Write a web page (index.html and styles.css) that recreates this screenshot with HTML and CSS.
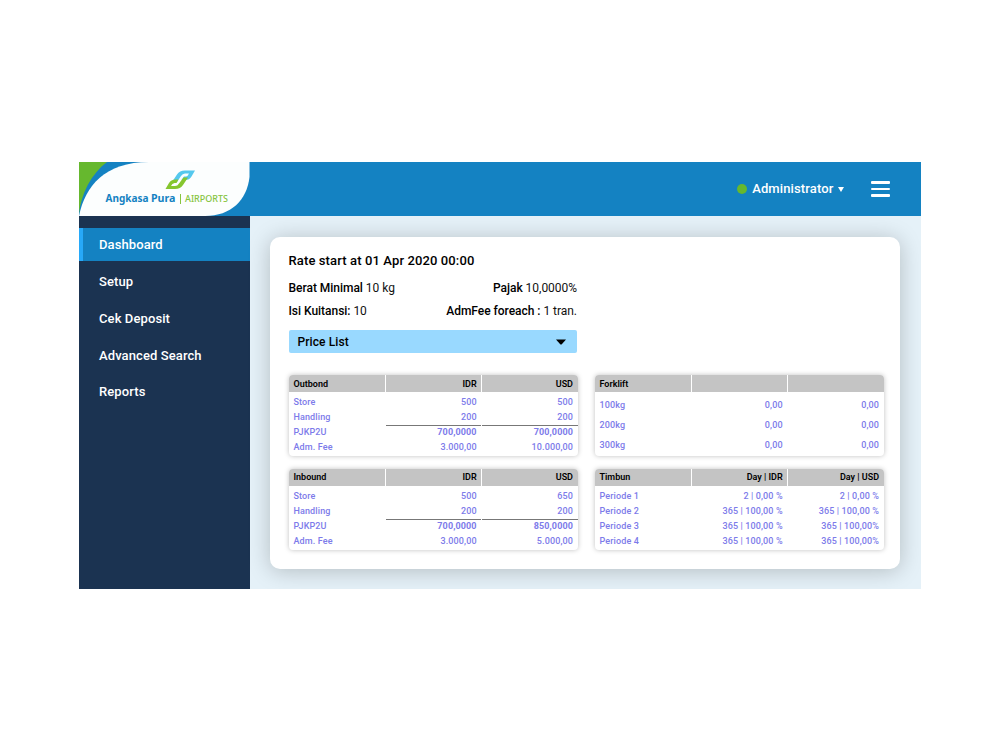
FILE: index.html
```html
<!DOCTYPE html>
<html lang="id">
<head>
    <meta charset="UTF-8">
    <meta name="viewport" content="width=device-width, initial-scale=1.0">
    <title>Angkasa Pura Airports - Dashboard</title>
    <link rel="stylesheet" href="styles.css">
</head>
<body>
    <div class="app">
        <header class="topbar">
            <svg class="brand" width="171" height="54" viewBox="0 0 171 54">
                <path d="M0 0H28C12 12 2 32 0 52Z" fill="#66b82e"/>
                <path d="M70 0H170.500V15C168 38 152 54 126 54H0C6 24 26 0 70 0Z" fill="#fcfefe"/>
                <!-- brand mark -->
                <path d="M93 20L98 12.500Q100.500 8.500 106 8.500H116L112.500 14.500Q110.500 18 106 18H102.500L105 14.500H107Q109 14 110 11.500H106Q103.500 11.500 102 14L98 20Z" fill="#55c8ee"/>
                <path d="M109 15.500L104 23Q101.500 27 96 27H86.500L90 21Q92 17.500 96.500 17.500H99.500L97.500 21H95.500Q93 21.500 92 24H96Q98.500 24 100 21.500L104.500 15.500Z" fill="#86c62f"/>
                <g class="brand-text">
                    <text class="brand-main" x="26.500" y="40" textLength="43" lengthAdjust="spacingAndGlyphs">Angkasa</text>
                    <text class="brand-main" x="72" y="40" textLength="24.500" lengthAdjust="spacingAndGlyphs">Pura</text>
                    <rect x="101" y="32" width="1" height="10" fill="#86c440"/>
                    <text class="brand-sub" x="106" y="40" textLength="43" lengthAdjust="spacingAndGlyphs">AIRPORTS</text>
                </g>
            </svg>
            <div class="user">
                <span class="status"></span>
                <span class="user-name">Administrator</span>
                <svg class="user-caret" width="6" height="5" viewBox="0 0 6 5"><path d="M0 0H6L3 5Z" fill="#fff"/></svg>
                <div class="menu-btn"><span></span><span></span><span></span></div>
            </div>
        </header>

        <div class="body">
            <nav class="sidebar">
                <a class="active">Dashboard</a>
                <a>Setup</a>
                <a>Cek Deposit</a>
                <a>Advanced Search</a>
                <a>Reports</a>
            </nav>

            <main class="content">
                <section class="card">
                    <div class="rate">
                        <h2>Rate start at 01 Apr 2020 00:00</h2>
                        <div class="rate-row">
                            <span><b>Berat Minimal</b> 10 kg</span>
                            <span><b>Pajak</b> 10,0000%</span>
                        </div>
                        <div class="rate-row">
                            <span><b>Isi Kuitansi:</b> 10</span>
                            <span><b>AdmFee foreach :</b> 1 tran.</span>
                        </div>
                        <div class="select">
                            <span>Price List</span>
                            <svg width="10" height="6" viewBox="0 0 10 6"><path d="M0 0.500H10L6 5Q5 6 4 5Z" fill="#000"/></svg>
                        </div>
                    </div>

                    <div class="tables">
                        <div class="panel">
                            <table>
                                <thead>
                                    <tr><th>Outbond</th><th>IDR</th><th>USD</th></tr>
                                </thead>
                                <tbody>
                                    <tr><td>Store</td><td>500</td><td>500</td></tr>
                                    <tr><td>Handling</td><td>200</td><td>200</td></tr>
                                    <tr class="total"><td>PJKP2U</td><td>700,0000</td><td>700,0000</td></tr>
                                    <tr><td>Adm. Fee</td><td>3.000,00</td><td>10.000,00</td></tr>
                                </tbody>
                            </table>
                        </div>

                        <div class="panel forklift">
                            <table>
                                <thead>
                                    <tr><th>Forklift</th><th></th><th></th></tr>
                                </thead>
                                <tbody>
                                    <tr><td>100kg</td><td>0,00</td><td>0,00</td></tr>
                                    <tr><td>200kg</td><td>0,00</td><td>0,00</td></tr>
                                    <tr><td>300kg</td><td>0,00</td><td>0,00</td></tr>
                                </tbody>
                            </table>
                        </div>

                        <div class="panel">
                            <table>
                                <thead>
                                    <tr><th>Inbound</th><th>IDR</th><th>USD</th></tr>
                                </thead>
                                <tbody>
                                    <tr><td>Store</td><td>500</td><td>650</td></tr>
                                    <tr><td>Handling</td><td>200</td><td>200</td></tr>
                                    <tr class="total"><td>PJKP2U</td><td>700,0000</td><td>850,0000</td></tr>
                                    <tr><td>Adm. Fee</td><td>3.000,00</td><td>5.000,00</td></tr>
                                </tbody>
                            </table>
                        </div>

                        <div class="panel">
                            <table>
                                <thead>
                                    <tr><th>Timbun</th><th>Day | IDR</th><th>Day | USD</th></tr>
                                </thead>
                                <tbody>
                                    <tr><td>Periode 1</td><td>2 | 0,00 %</td><td>2 | 0,00 %</td></tr>
                                    <tr><td>Periode 2</td><td>365 | 100,00 %</td><td>365 | 100,00 %</td></tr>
                                    <tr><td>Periode 3</td><td>365 | 100,00 %</td><td>365 | 100,00%</td></tr>
                                    <tr><td>Periode 4</td><td>365 | 100,00 %</td><td>365 | 100,00%</td></tr>
                                </tbody>
                            </table>
                        </div>
                    </div>
                </section>
            </main>
        </div>
    </div>
</body>
</html>
```
FILE: styles.css
```css
* {
    box-sizing: border-box;
}

body {
    margin: 0;
    padding: 162px 79px 0;
    background-color: #fff;
    font-family: Roboto, sans-serif;
    color: #111;
}

.app {
    width: 842px;
    height: 427px;
    overflow: hidden;
}

/* top bar */
.topbar {
    display: flex;
    justify-content: space-between;
    height: 54px;
    background-color: #1482c2;
}

.brand-text {
    font-family: "Noto Sans", sans-serif;
}

.brand-main {
    font-size: 10.500px;
    font-weight: 700;
    fill: #1482c2;
}

.brand-sub {
    font-size: 9.500px;
    font-weight: 500;
    fill: #86c440;
}

.user {
    display: flex;
    align-items: center;
    padding-right: 31px;
    color: #fff;
}

.status {
    width: 10px;
    height: 10px;
    margin-right: 5px;
    border-radius: 50%;
    background-color: #66b82e;
}

.user-name {
    font-size: 13px;
    line-height: 16px;
    padding-bottom: 1px;
    font-weight: 500;
    letter-spacing: 0.13px;
}

.user-caret {
    margin: 1px 27.500px 0 4px;
}

.menu-btn {
    display: flex;
    flex-direction: column;
    gap: 4px;
    width: 19px;
}

.menu-btn span {
    height: 2.600px;
    border-radius: 1px;
    background-color: #fff;
}

/* sidebar */
.body {
    display: flex;
    height: 373px;
}

.sidebar {
    width: 170.500px;
    padding-top: 12px;
    background-color: #1b3351;
}

.sidebar a {
    display: block;
    height: 33px;
    margin-bottom: 3.850px;
    padding-left: 20px;
    line-height: 33px;
    font-size: 13px;
    font-weight: 500;
    letter-spacing: 0.1px;
    color: #fff;
}

.sidebar .active {
    padding-left: 16px;
    border-left: 4px solid #27a9f9;
    background-color: #1482c2;
}

/* content */
.content {
    flex: 1;
    padding: 20.500px 20px 20px;
    background-color: #e5f1f8;
}

.card {
    width: 630.500px;
    height: 332px;
    padding: 16.500px 15px 0 19px;
    border-radius: 10px;
    background-color: #fff;
    box-shadow: 0 2px 22px rgba(0, 0, 0, 0.22);
}

.rate {
    width: 288.500px;
}

.rate h2 {
    margin: 0 0 11px;
    font-size: 13px;
    line-height: 16px;
    font-weight: 500;
    letter-spacing: 0.12px;
    color: #000;
}

.rate-row {
    display: flex;
    justify-content: space-between;
    margin-bottom: 7px;
    font-size: 12px;
    line-height: 16px;
    letter-spacing: -0.03px;
}

.rate-row b {
    font-weight: 500;
    color: #000;
}

.select {
    display: flex;
    align-items: center;
    justify-content: space-between;
    height: 23px;
    margin-top: 11px;
    padding: 0 11px 0 9px;
    border-radius: 2px;
    background-color: #99d9ff;
    font-size: 12px;
    font-weight: 500;
    letter-spacing: 0.1px;
    color: #000;
}

/* price tables */
.tables {
    display: grid;
    grid-template-columns: 289px 289px;
    gap: 12.500px 17px;
    margin-top: 22px;
}

.panel {
    height: 81px;
    border-radius: 4px;
    overflow: hidden;
    box-shadow: 0 0 5px rgba(0, 0, 0, 0.25);
}

table {
    width: 100%;
    border-spacing: 0;
    table-layout: fixed;
    font-size: 9px;
    letter-spacing: 0.12px;
}

th, td {
    padding: 0 4.500px 0 5px;
    line-height: 15px;
    text-align: right;
    font-weight: 500;
}

th:first-child, td:first-child {
    text-align: left;
}

th {
    height: 20px;
    padding-top: 1px;
    border-bottom: 3px solid #fff;
    background-color: #c4c4c4;
    font-weight: 600;
    letter-spacing: 0;
    color: #000;
}

th + th {
    border-left: 1.500px solid #fff;
}

td {
    height: 15px;
    color: #7d7bea;
}

.total td + td {
    font-weight: 700;
    background: linear-gradient(#777, #777) right top / calc(100% - 1px) 1px no-repeat;
}

.forklift td {
    height: 20px;
}
```
